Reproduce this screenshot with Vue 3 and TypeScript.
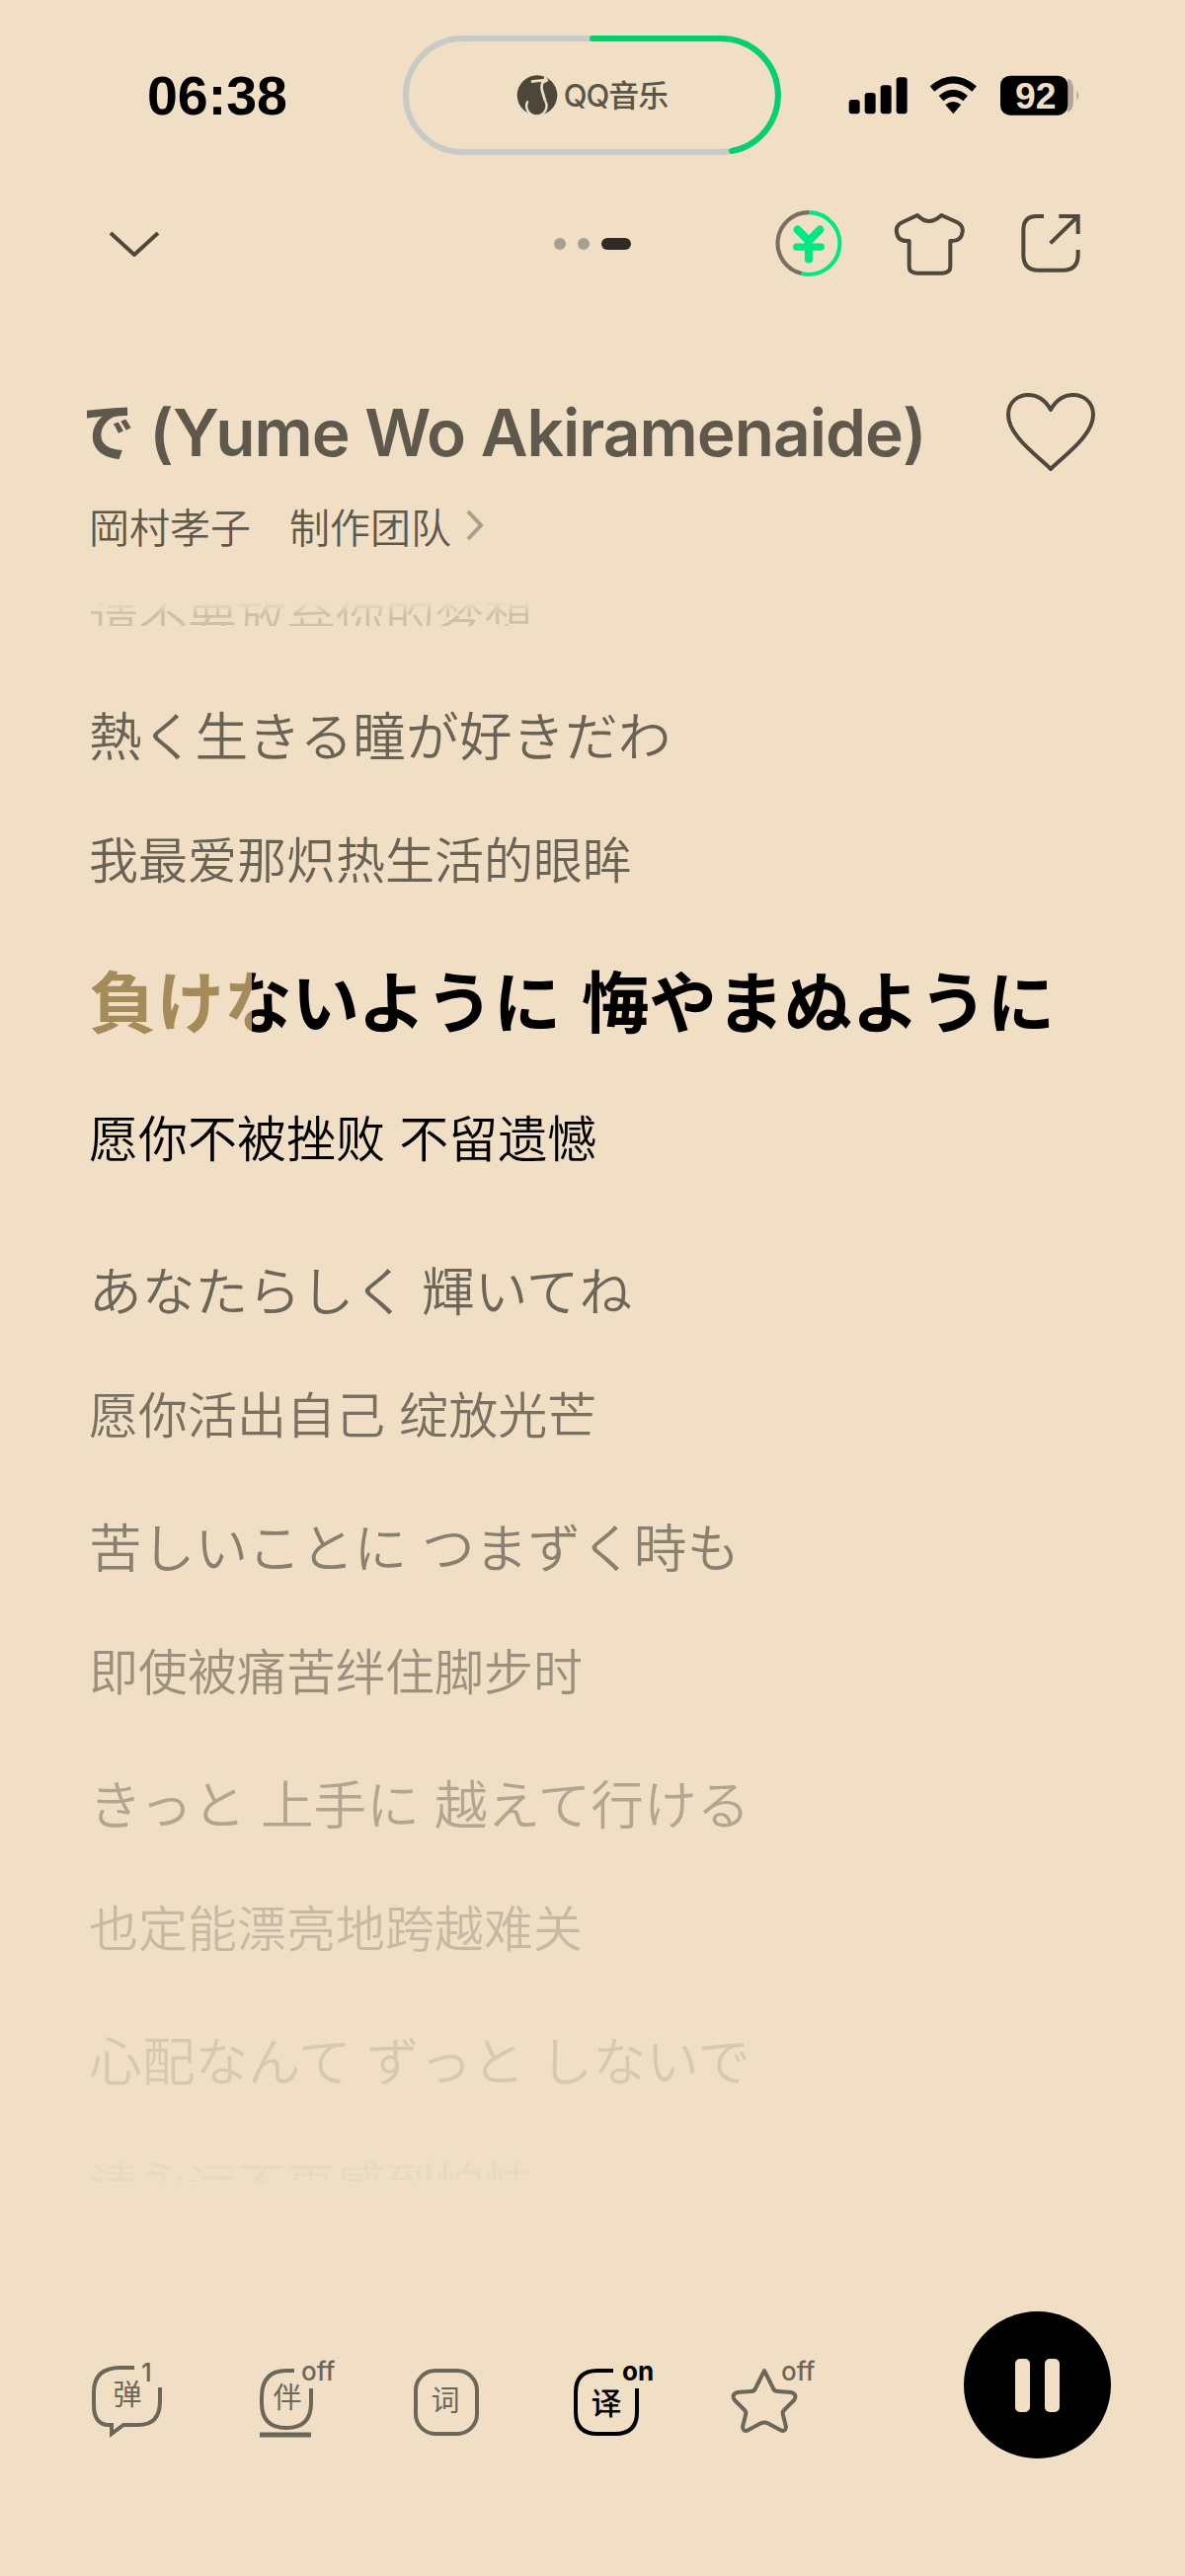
<script setup lang="ts">
interface LyricGroup {
  jp: string
  zh: string
  jpFade: number
  zhFade: number
}

const before: LyricGroup[] = [
  { jp: '熱く生きる瞳が好きだわ', zh: '我最爱那炽热生活的眼眸', jpFade: 0.92, zhFade: 0.92 }
]

const after: LyricGroup[] = [
  { jp: 'あなたらしく 輝いてね', zh: '愿你活出自己 绽放光芒', jpFade: 0.9, zhFade: 0.82 },
  { jp: '苦しいことに つまずく時も', zh: '即使被痛苦绊住脚步时', jpFade: 0.7, zhFade: 0.58 },
  { jp: 'きっと 上手に 越えて行ける', zh: '也定能漂亮地跨越难关', jpFade: 0.42, zhFade: 0.28 },
  { jp: '心配なんて ずっと しないで', zh: '请永远不再感到怕怯', jpFade: 0.16, zhFade: 0.04 }
]
</script>

<template>
  <div class="page">
    <div class="status">
      <span class="time">06:38</span>
      <div class="capsule">
        <svg class="ring" width="383" height="121" viewBox="0 0 383 121" fill="none">
          <rect x="3" y="3" width="377" height="115" rx="57.5" stroke="#c9c9c6" stroke-width="6" />
          <path d="M192 3H323A57.5 57.5 0 0 1 333 117" stroke="#00d070" stroke-width="6" stroke-linecap="round" />
        </svg>
        <svg width="42" height="41" viewBox="28 15 124 120">
          <circle cx="90" cy="75" r="60" fill="#4d463b" />
          <path d="M112 12L124 32L108 40Z" fill="#f0dfc5" />
          <path d="M72 34L108 30Q100 50 106 66L114 92" stroke="#f0dfc5" stroke-width="8" fill="none" />
          <path d="M114 92A30 30 0 1 1 62 92" stroke="#f0dfc5" stroke-width="7" fill="none" />
        </svg>
        <span class="capsule-text">QQ音乐</span>
      </div>
      <svg class="sys" width="238" height="44" viewBox="25 30 714 132">
        <rect x="30" y="108" width="33" height="43" rx="9" />
        <rect x="78" y="87" width="33" height="64" rx="9" />
        <rect x="126" y="64" width="33" height="87" rx="9" />
        <rect x="174" y="40" width="33" height="111" rx="9" />
        <path d="M283 75Q347 20 411 75M310 104Q347 72 384 104" fill="none" stroke="#000" stroke-width="21" />
        <path d="M323 123Q347 105 371 123L347 151Z" />
        <path d="M695 43Q712 52 712 75V115Q712 138 695 147Z" fill="#b3a795" />
        <path d="M722 80Q734 95 722 110Z" fill="#b3a795" />
        <rect x="490" y="35" width="205" height="120" rx="30" />
        <text x="597" y="134" class="batt">92</text>
      </svg>
    </div>

    <div class="toolbar">
      <svg class="chevron" width="52" height="26" viewBox="0 0 52 26" fill="none">
        <path d="M2 2L26 24L50 2" stroke="#4f483c" stroke-width="4" />
      </svg>
      <div class="dots">
        <i></i>
        <i></i>
        <i class="on"></i>
      </div>
      <svg class="coin" width="70" height="70" viewBox="0 0 68 68" fill="none">
        <path d="M34 3A30.5 30.5 0 0 0 27 63.2" stroke="#787062" stroke-width="4" />
        <path d="M34 3A30.5 30.5 0 1 1 27 63.2" stroke="#00e884" stroke-width="4" />
        <path d="M23 20L34 31L45 20M34 31V49" stroke="#00e884" stroke-width="8" stroke-linecap="round" stroke-linejoin="round" />
        <path d="M22 37H46" stroke="#00e884" stroke-width="7" stroke-linecap="round" />
      </svg>
      <svg class="shirt" width="73" height="65" viewBox="403 40 219 195" fill="none">
        <path d="M475 49Q510 85 548 49L595 70Q615 80 612 100Q608 130 575 127V205Q575 225 550 225H475Q450 225 450 205V127Q415 130 412 100Q408 80 430 70Z" stroke="#4f483c" stroke-width="12" stroke-linejoin="round" />
      </svg>
      <svg class="share" width="62" height="65" viewBox="790 46 186 195" fill="none">
        <path d="M862 58H840Q800 58 800 100V175Q800 222 845 222H920Q966 222 966 175V160" stroke="#4f483c" stroke-width="12" />
        <path d="M882 140L964 60M908 58H966V112" stroke="#4f483c" stroke-width="12" />
      </svg>
    </div>

    <div class="title-row">
      <div class="title"><span>で (Yume Wo Akiramenaide)</span></div>
      <svg class="heart" width="92" height="80" viewBox="0 0 92 80" fill="none">
        <path d="M46 77C28 60 3 42 3 22C3 9 13 2 23 2C33 2 41 8 46 17C51 8 59 2 69 2C79 2 89 9 89 22C89 42 64 60 46 77Z" stroke="#4f483c" stroke-width="4" stroke-linejoin="round" />
      </svg>
    </div>

    <div class="artist">
      <span>岡村孝子</span>
      <span class="team">制作团队</span>
      <svg width="18" height="32" viewBox="0 0 18 32" fill="none">
        <path d="M2 2L15 16L2 30" stroke="#a79e8d" stroke-width="4" />
      </svg>
    </div>

    <div class="lyrics">
      <p class="zh lead">请不要放弃你的梦想</p>
      <div v-for="g in before" :key="g.jp" class="group">
        <p class="jp" :style="{ opacity: g.jpFade }">{{ g.jp }}</p>
        <p class="zh" :style="{ opacity: g.zhFade }">{{ g.zh }}</p>
      </div>
      <div class="group current">
        <p class="jp"><span class="karaoke">負けないように 悔やまぬように</span></p>
        <p class="zh">愿你不被挫败 不留遗憾</p>
      </div>
      <div v-for="g in after" :key="g.jp" class="group">
        <p class="jp" :style="{ opacity: g.jpFade }">{{ g.jp }}</p>
        <p class="zh" :style="{ opacity: g.zhFade }">{{ g.zh }}</p>
      </div>
    </div>

    <div class="controls">
      <div class="tools">
        <svg class="tool" width="88" height="85" viewBox="0 0 88 85" fill="none">
          <path d="M46 12H32Q5 12 5 37V50Q5 68 18 70H23V79L35 70H50Q72 70 72 46V32" />
          <text x="39" y="50" class="glyph">弹</text>
          <text x="53" y="26" class="badge">1</text>
        </svg>
        <svg class="tool" width="88" height="85" viewBox="0 0 88 85" fill="none">
          <path d="M40 15H32Q7 15 7 42V48Q7 73 32 73Q57 73 57 48V33" />
          <path d="M5 80H57" stroke-width="5" />
          <text x="33" y="53" class="glyph">伴</text>
          <text x="47" y="25" class="badge">off</text>
        </svg>
        <svg class="tool" width="88" height="85" viewBox="0 0 88 85" fill="none">
          <rect x="13" y="15" width="62" height="64" rx="20" />
          <text x="43" y="56" class="glyph">词</text>
        </svg>
        <svg class="tool active" width="88" height="85" viewBox="0 0 88 85" fill="none">
          <path d="M46 15H30Q8 15 8 37V57Q8 79 30 79H48Q70 79 70 57V33" />
          <text x="39" y="59" class="glyph">译</text>
          <text x="55" y="25" class="badge">on</text>
        </svg>
        <svg class="tool" width="88" height="85" viewBox="0 0 88 85" fill="none">
          <path d="M36 15L45 33Q46 36 50 36L63 37Q70 39 66 45L56 55Q54 57 55 60L58 72Q57 78 52 75L39 68Q36 67 33 68L20 75Q15 78 14 72L17 60Q18 57 16 55L6 45Q2 39 9 37L22 36Q26 36 27 33Z" stroke-linejoin="round" />
          <text x="53" y="25" class="badge">off</text>
        </svg>
      </div>
      <button class="pause">
        <i></i>
        <i></i>
      </button>
    </div>
  </div>
</template>

<style scoped>
.page {
  width: 1200px;
  height: 2609px;
  overflow: hidden;
  background: #f0dfc5;
  color: #5f584c;
  font-family: Inter, "Noto Sans CJK SC", sans-serif;
}

p {
  margin: 0;
}

.status {
  display: flex;
  align-items: center;
  height: 121px;
  padding: 36px 0 0 149px;
}

.time {
  width: 259px;
  font-family: "Liberation Sans", sans-serif;
  font-size: 55.5px;
  font-weight: 700;
  color: #000;
}

.capsule {
  position: relative;
  display: flex;
  align-items: center;
  justify-content: center;
  gap: 6px;
  width: 383px;
  height: 121px;
}

.ring {
  position: absolute;
  left: 0;
  top: 0;
}

.capsule-text {
  margin-top: -4px;
  font-size: 31px;
  font-weight: 500;
  letter-spacing: -1px;
  color: #5b5448;
}

.sys {
  margin-left: 67px;
}

.batt {
  font-family: "Liberation Sans", sans-serif;
  font-size: 112px;
  font-weight: 700;
  text-anchor: middle;
  fill: #f0dfc5;
}

.toolbar {
  display: flex;
  align-items: center;
  height: 70px;
  margin-top: 55px;
  padding-left: 110px;
}

.dots {
  display: flex;
  align-items: center;
  gap: 12px;
  margin-left: 399px;
}

.dots i {
  width: 12px;
  height: 12px;
  border-radius: 50%;
  background: #a89f8f;
}

.dots i.on {
  width: 30px;
  border-radius: 6px;
  background: #2f2b25;
}

.coin {
  margin-left: 145px;
}

.shirt {
  margin-left: 51px;
}

.share {
  margin-left: 55px;
}

.title-row {
  display: flex;
  align-items: center;
  height: 80px;
  margin-top: 116px;
  padding-left: 88px;
}

.title {
  width: 930px;
  margin-bottom: 10px;
  overflow: hidden;
  white-space: nowrap;
  font-size: 65.8px;
  font-weight: 600;
  letter-spacing: -1px;
}

.title span {
  display: inline-block;
  margin-left: -17px;
}

.artist {
  display: flex;
  align-items: center;
  height: 44px;
  margin-top: 32px;
  padding-left: 90px;
  font-size: 41px;
  font-weight: 350;
}

.team {
  margin-left: 39px;
  margin-right: 15px;
}

.lyrics {
  height: 1600px;
  margin-top: 55px;
  padding-left: 90px;
  overflow: hidden;
}

.jp {
  font-family: "Noto Sans CJK JP", sans-serif;
  font-size: 53.7px;
  font-weight: 350;
  line-height: 54px;
  word-spacing: 3px;
  white-space: nowrap;
}

.zh {
  font-family: "Noto Sans CJK SC", sans-serif;
  font-size: 50px;
  font-weight: 350;
  line-height: 50px;
  word-spacing: 3px;
  white-space: nowrap;
}

.lead {
  margin-top: -11px;
  margin-bottom: 82px;
  height: 36px;
  opacity: 0.22;
  -webkit-mask-image: linear-gradient(180deg, transparent 11px, #000 24px);
  mask-image: linear-gradient(180deg, transparent 11px, #000 24px);
}

.group {
  display: flex;
  flex-direction: column;
  gap: 73px;
  margin-bottom: 83px;
}

.current {
  gap: 80px;
  margin-top: 86px;
  margin-bottom: 103px;
  color: #000;
}

.current .jp {
  font-size: 68.5px;
  line-height: 66px;
  font-weight: 700;
  word-spacing: 5px;
}

.karaoke {
  background: linear-gradient(90deg, #a58a5a 165px, #000 165px);
  -webkit-background-clip: text;
  background-clip: text;
  color: transparent;
}

.controls {
  display: flex;
  align-items: flex-start;
  margin-top: 132px;
  padding-left: 90px;
}

.tools {
  display: grid;
  grid-template-columns: 168px 150px 167px 163px 88px;
  margin-top: 45px;
}

.tool {
  stroke: #6d675a;
  stroke-width: 4;
}

.tool.active {
  stroke: #000;
}

.glyph {
  font-family: "Noto Sans CJK SC", sans-serif;
  font-size: 29px;
  text-anchor: middle;
  stroke: none;
  fill: #6d675a;
}

.badge {
  font-family: Inter, sans-serif;
  font-size: 26px;
  font-weight: 500;
  stroke: none;
  fill: #6d675a;
}

.active .glyph,
.active .badge {
  fill: #000;
}

.active .glyph {
  font-size: 31px;
  font-weight: 500;
}

.active .badge {
  font-weight: 700;
}

.pause {
  display: flex;
  align-items: center;
  justify-content: center;
  gap: 15px;
  width: 149px;
  height: 149px;
  margin-left: 150px;
  padding: 0;
  border: 0;
  border-radius: 50%;
  background: #000;
}

.pause i {
  width: 15px;
  height: 54px;
  border-radius: 5px;
  background: #f0dfc5;
}
</style>
